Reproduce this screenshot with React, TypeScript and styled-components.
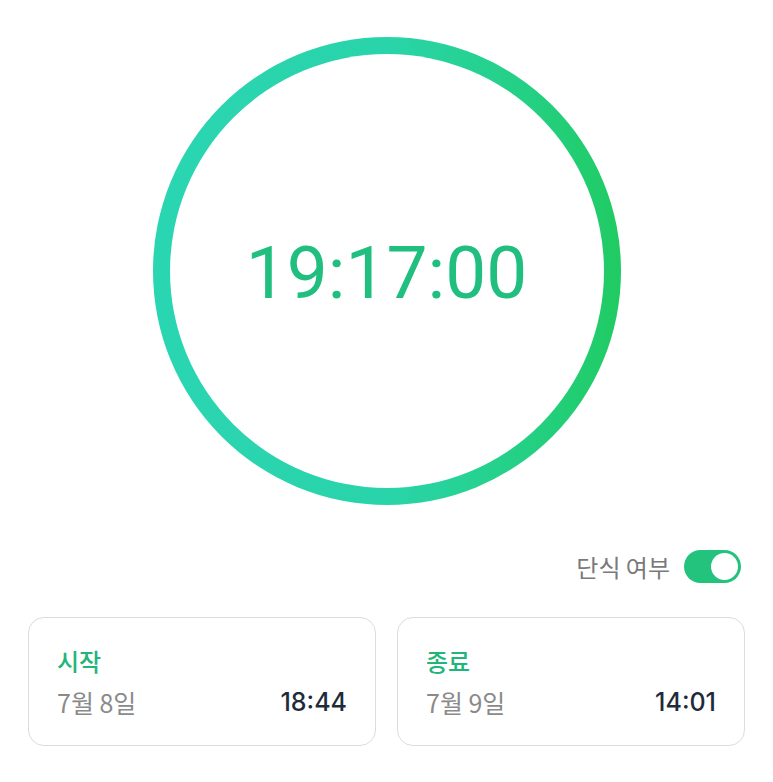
import styled, { createGlobalStyle } from 'styled-components';

const Global = createGlobalStyle`
    body {
        margin: 0;
        background: #ffffff;
        font-family: Inter, "Noto Sans CJK KR", sans-serif;
    }
`;

const Page = styled.div`
    width: 773px;
    box-sizing: border-box;
    padding: 37px 28px 0;
    display: flex;
    flex-direction: column;
`;

const Ring = styled.div`
    align-self: center;
    width: 468px;
    height: 468px;
    box-sizing: border-box;
    padding: 17px;
    border-radius: 50%;
    background: linear-gradient(90deg, #2ad5b2 0%, #29d4aa 50%, #24d083 80%, #20cb62 100%);
    display: flex;
`;

const Face = styled.div`
    flex: 1;
    border-radius: 50%;
    background: #ffffff;
    display: flex;
    align-items: center;
    justify-content: center;
`;

const Clock = styled.span`
    font-family: Roboto, sans-serif;
    font-size: 73px;
    font-weight: 400;
    color: #20bf80;
    margin-top: 4px;
`;

const ToggleRow = styled.div`
    margin-top: 45px;
    display: flex;
    justify-content: flex-end;
    align-items: center;
    gap: 14px;
    padding-right: 4px;
`;

const ToggleLabel = styled.span`
    font-family: "Noto Sans CJK KR", sans-serif;
    font-size: 24px;
    line-height: 33px;
    color: #7a7a7a;
`;

const Switch = styled.div<{ on: boolean }>`
    width: 57px;
    height: 33px;
    box-sizing: border-box;
    padding: 3px;
    border-radius: 17px;
    background: ${p => (p.on ? '#23c27d' : '#d4d4d4')};
    display: flex;
    justify-content: ${p => (p.on ? 'flex-end' : 'flex-start')};
`;

const Knob = styled.div`
    width: 27px;
    height: 27px;
    border-radius: 50%;
    background: #ffffff;
`;

const Cards = styled.div`
    margin-top: 34px;
    display: grid;
    grid-template-columns: 1fr 1fr;
    gap: 21px;
`;

const Card = styled.div`
    height: 129px;
    box-sizing: border-box;
    border: 1.5px solid #dcdcdc;
    border-radius: 16px;
    padding: 29px 28px 0 28px;
    display: flex;
    flex-direction: column;
    gap: 12px;
`;

const CardTitle = styled.span`
    font-family: "Noto Sans CJK KR", sans-serif;
    font-size: 24px;
    font-weight: 500;
    color: #22b57a;
    line-height: 28px;
`;

const CardRow = styled.div`
    display: flex;
    justify-content: space-between;
    align-items: center;
    line-height: 30px;
`;

const CardDate = styled.span`
    font-family: "Noto Sans CJK KR", sans-serif;
    font-size: 25px;
    color: #8a8a8a;
`;

const CardTime = styled.span`
    font-size: 25px;
    font-weight: 500;
    color: #1e2b3a;
`;

const slots = [
    { title: '시작', date: '7월 8일', time: '18:44' },
    { title: '종료', date: '7월 9일', time: '14:01' },
];

function App() {
    return (
        <>
            <Global />
            <Page>
                <Ring>
                    <Face>
                        <Clock>19:17:00</Clock>
                    </Face>
                </Ring>
                <ToggleRow>
                    <ToggleLabel>단식 여부</ToggleLabel>
                    <Switch on>
                        <Knob />
                    </Switch>
                </ToggleRow>
                <Cards>
                    {slots.map(s => (
                        <Card key={s.title}>
                            <CardTitle>{s.title}</CardTitle>
                            <CardRow>
                                <CardDate>{s.date}</CardDate>
                                <CardTime>{s.time}</CardTime>
                            </CardRow>
                        </Card>
                    ))}
                </Cards>
            </Page>
        </>
    );
}

export default App;
